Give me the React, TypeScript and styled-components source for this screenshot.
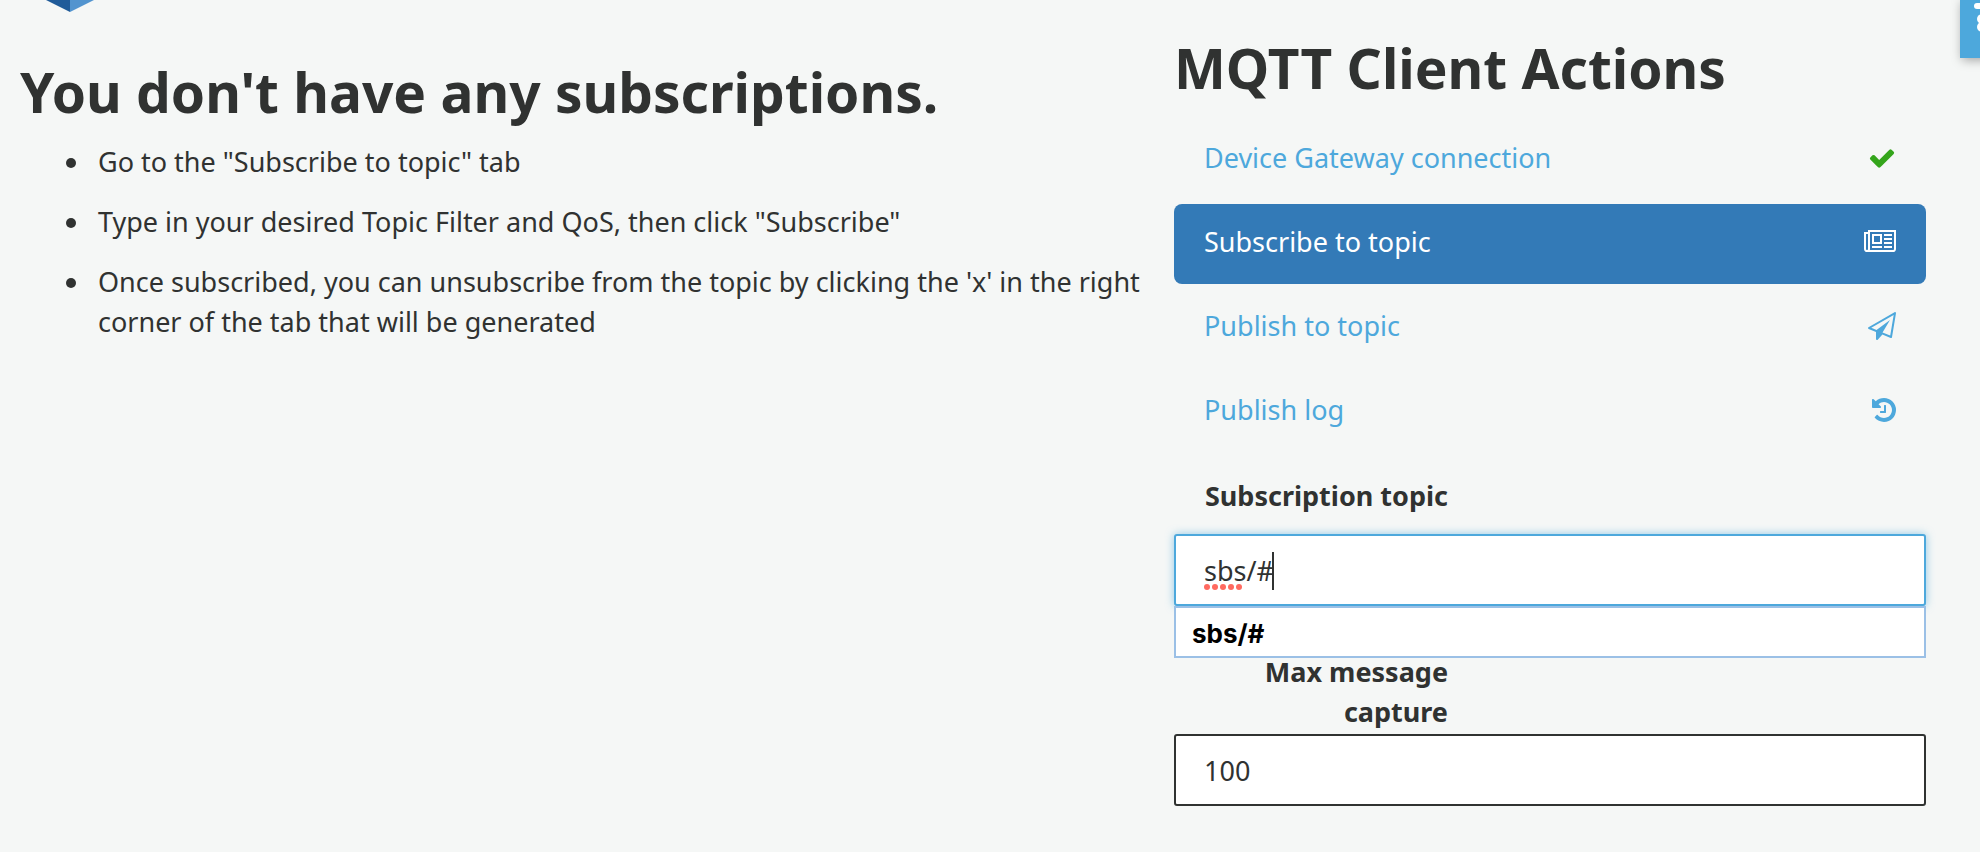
import React, { useState } from "react";
import styled, { createGlobalStyle } from "styled-components";

const GlobalStyle = createGlobalStyle`
  * { box-sizing: border-box; }
  body {
    margin: 0;
    background: #f5f7f6;
    color: #303231;
    font-family: "Noto Sans", sans-serif;
    font-size: 27px;
    line-height: 40px;
  }
`;

const Page = styled.div`
  position: relative;
  overflow: hidden;
  padding-bottom: 40px;
`;

const Logo = styled.svg`
  display: block;
  width: 80px;
  height: 12px;
  margin-left: 30px;
`;

const Columns = styled.main`
  display: grid;
  grid-template-columns: 3fr 2fr;
  column-gap: 26px;
  padding: 0 54px 0 20px;
`;

const Left = styled.section`
  padding-top: 48px;
`;

const Right = styled.section`
  padding-top: 24px;
`;

const Title = styled.h1`
  margin: 0;
  font-size: 55px;
  font-weight: 700;
  line-height: 64px;
`;

const Steps = styled.ul`
  margin: 18px 0 0;
  padding: 0 0 0 78px;
  list-style: none;
`;

const Step = styled.li`
  position: relative;
  margin-bottom: 20px;

  &::before {
    content: "";
    position: absolute;
    left: -32px;
    top: 16px;
    width: 10px;
    height: 10px;
    border-radius: 50%;
    background: currentColor;
  }
`;

const Nav = styled.nav`
  display: flex;
  flex-direction: column;
  gap: 4px;
  margin-top: 20px;
`;

const NavLink = styled.a<{ $active?: boolean }>`
  display: flex;
  justify-content: space-between;
  align-items: flex-start;
  height: 80px;
  padding: 18px 30px;
  border-radius: 8px;
  text-decoration: none;
  color: ${(p) => (p.$active ? "#fff" : "#4da8dc")};
  background: ${(p) => (p.$active ? "#337ab7" : "transparent")};
`;

const Icon = styled.svg<{ $color?: string }>`
  height: 28px;
  margin-top: 6px;
  fill: ${(p) => p.$color || "currentColor"};
`;

const Form = styled.form`
  margin-top: 24px;
`;

const Label = styled.label`
  display: block;
  width: 274px;
  font-weight: 700;
  text-align: right;
`;

const Field = styled.div<{ $top: number; $bottom: number }>`
  position: relative;
  margin-top: ${(p) => p.$top}px;
  margin-bottom: ${(p) => p.$bottom}px;
`;

const TextInput = styled.input<{ $active?: boolean }>`
  display: block;
  width: 100%;
  height: 72px;
  padding: 0 28px;
  border: 2px solid ${(p) => (p.$active ? "#4da8dc" : "#303231")};
  border-radius: 3px;
  outline: none;
  background: #fff;
  color: inherit;
  font: inherit;
  caret-color: ${(p) => (p.$active ? "transparent" : "auto")};
  box-shadow: ${(p) => (p.$active ? "0 0 8px rgba(77, 168, 220, 0.6)" : "none")};
`;

const Caret = styled.span`
  position: absolute;
  left: 98px;
  top: 18px;
  width: 2px;
  height: 38px;
  background: #303231;
`;

const SpellMarks = styled.svg`
  position: absolute;
  left: 30px;
  top: 50px;
  width: 40px;
  height: 6px;
`;

const Suggestions = styled.ul`
  position: absolute;
  z-index: 1;
  top: 100%;
  left: 0;
  right: 0;
  margin: 0;
  padding: 0;
  list-style: none;
  border: 2px solid #9bc0e6;
  background: #fff;
`;

const Suggestion = styled.li`
  padding: 6px 16px 2px;
  color: #000;
  font-family: Inter, sans-serif;
  font-size: 26px;
  font-weight: 700;
`;

const SideTab = styled.button`
  position: absolute;
  top: 0;
  right: -20px;
  width: 40px;
  height: 58px;
  padding: 0;
  border: 0;
  background: #4da8dc;
  box-shadow: 2px 2px 10px rgba(0, 0, 0, 0.35);

  svg {
    display: block;
  }
`;

const actions = [
  {
    label: "Device Gateway connection",
    width: 1792,
    color: "#34a51b",
    d: "M1671 566q0 40-28 68l-724 724-136 136q-28 28-68 28t-68-28l-136-136-362-362q-28-28-28-68t28-68l136-136q28-28 68-28t68 28l294 295 656-657q28-28 68-28t68 28l136 136q28 28 28 68z",
  },
  {
    label: "Subscribe to topic",
    width: 2048,
    active: true,
    d: "M1024 512h-384v384h384v-384zm128 640v128h-640v-128h640zm0-768v640h-640v-640h640zm640 768v128h-512v-128h512zm0-256v128h-512v-128h512zm0-256v128h-512v-128h512zm0-256v128h-512v-128h512zm-1536 960v-960h-128v960q0 26 19 45t45 19 45-19 19-45zm1664 0v-1088h-1536v1088q0 33-11 64h1483q26 0 45-19t19-45zm128-1216v1216q0 80-56 136t-136 56h-1664q-80 0-136-56t-56-136v-1088h256v-128h1792z",
  },
  {
    label: "Publish to topic",
    width: 1792,
    d: "M1764 11q33 24 27 64l-256 1536q-5 29-32 45-14 8-31 8-11 0-24-5l-527-215-298 327q-18 21-47 21-14 0-23-4-19-7-30-23.5t-11-36.5v-452l-472-193q-37-14-40-55-3-39 32-59l1664-960q35-21 68 2zm-342 1499l221-1323-1434 827 336 137 863-639-478 797z",
  },
  {
    label: "Publish log",
    width: 1664,
    d: "M1664 896q0 156-61 298t-164 245-245 164-298 61q-172 0-327-72.5t-264-204.5q-7-10-6.5-22.5t8.5-20.5l137-138q10-9 25-9 16 2 23 12 73 95 179 147t225 52q104 0 198.5-40.5t163.5-109.5 109.5-163.5 40.5-198.5-40.5-198.5-109.5-163.5-163.5-109.5-198.5-40.5q-98 0-188 35.5t-160 101.5l137 138q31 30 14 69-17 40-59 40h-448q-26 0-45-19t-19-45v-448q0-42 40-59 39-17 69 14l130 129q107-101 244.5-156.5t284.5-55.5q156 0 298 61t245 164 164 245 61 298zm-640-288v448q0 14-9 23t-23 9h-320q-14 0-23-9t-9-23v-64q0-14 9-23t23-9h224v-352q0-14 9-23t23-9h64q14 0 23 9t9 23z",
  },
];

export default function App() {
  const [topic, setTopic] = useState("sbs/#");
  const [max, setMax] = useState("100");

  return (
    <>
      <GlobalStyle />
      <Page>
        <Logo viewBox="0 0 80 12" aria-hidden="true">
          <path d="M16 0H40V12Z" fill="#205b99" />
          <path d="M64 0H40V12Z" fill="#5294cf" />
        </Logo>
        <Columns>
          <Left>
            <Title>You don't have any subscriptions.</Title>
            <Steps>
              <Step>Go to the "Subscribe to topic" tab</Step>
              <Step>Type in your desired Topic Filter and QoS, then click "Subscribe"</Step>
              <Step>
                Once subscribed, you can unsubscribe from the topic by clicking the 'x' in the right
                corner of the tab that will be generated
              </Step>
            </Steps>
          </Left>
          <Right>
            <Title>MQTT Client Actions</Title>
            <Nav>
              {actions.map((a) => (
                <NavLink key={a.label} href="#" $active={a.active}>
                  {a.label}
                  <Icon viewBox={`0 0 ${a.width} 1792`} $color={a.color} aria-hidden="true">
                    <path d={a.d} />
                  </Icon>
                </NavLink>
              ))}
            </Nav>
            <Form>
              <Label htmlFor="topic">Subscription topic</Label>
              <Field $top={18} $bottom={46}>
                <TextInput
                  id="topic"
                  $active
                  autoComplete="off"
                  value={topic}
                  onChange={(e) => setTopic(e.target.value)}
                />
                <SpellMarks viewBox="0 0 40 6" aria-hidden="true">
                  {[3, 11, 19, 27, 35].map((x) => (
                    <circle key={x} cx={x} cy="3" r="3" fill="#ff6a60" />
                  ))}
                </SpellMarks>
                <Caret />
                <Suggestions>
                  <Suggestion>sbs/#</Suggestion>
                </Suggestions>
              </Field>
              <Label htmlFor="max">Max message capture</Label>
              <Field $top={2} $bottom={0}>
                <TextInput id="max" value={max} onChange={(e) => setMax(e.target.value)} />
              </Field>
            </Form>
          </Right>
        </Columns>
        <SideTab type="button" aria-label="Feedback">
          <svg width="40" height="58" viewBox="0 0 40 58" fill="#fff" aria-hidden="true">
            <rect x="14" y="3" width="20" height="6" rx="3" />
            <circle cx="22" cy="19" r="5" />
            <circle cx="22" cy="27" r="5" />
          </svg>
        </SideTab>
      </Page>
    </>
  );
}
